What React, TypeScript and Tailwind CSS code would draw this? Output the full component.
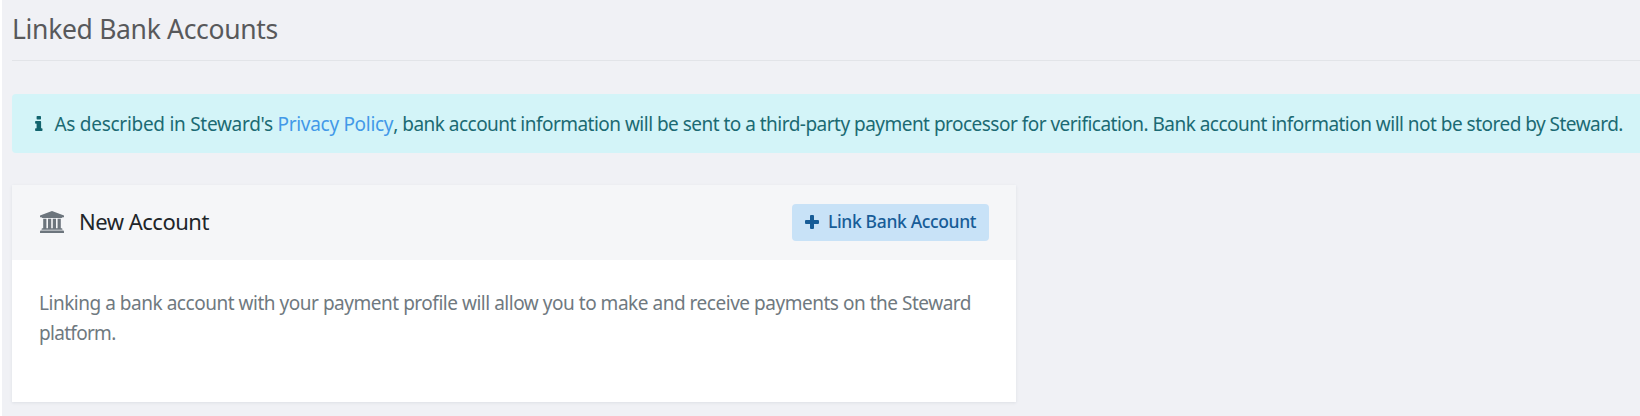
import React from 'react';

function BankIcon() {
  return (
    <svg viewBox="0 0 24 22" className="w-6 h-[22px] mt-px shrink-0" fill="#6c757d">
      <path d="M12 0 24 4.6v1.6h-1.6q0 .8-.9.8h-19q-.9 0-.9-.8H0V4.6Z" />
      <path d="M3.2 7.8h3.2v9.4h1.6V7.8h3.2v9.4h1.6V7.8H16v9.4h1.6V7.8h3.2v9.4h.7q.9 0 .9.8v.8H1.6V18q0-.8.9-.8h.7Z" />
      <path d="M.9 19.6h22.2q.9 0 .9.8V22H0v-1.6q0-.8.9-.8Z" />
    </svg>
  );
}

function InfoIcon() {
  return (
    <svg viewBox="0 0 8 15" className="w-2 h-[15px] shrink-0" fill="#12646e">
      <rect x="1.6" y="0" width="4.4" height="3.4" rx="0.7" />
      <path d="M.8 5h4.6q.7 0 .7.7v6.6h.7q.7 0 .7.7v1.3q0 .7-.7.7H.8q-.7 0-.7-.7V13q0-.7.7-.7h.8V7.7H.8q-.7 0-.7-.7V5.7Q.1 5 .8 5Z" />
    </svg>
  );
}

function PlusIcon() {
  return (
    <svg viewBox="0 0 14 14" className="w-3.5 h-3.5 shrink-0" fill="#175c97">
      <path d="M6 0h2q1 0 1 1v4h4q1 0 1 1v2q0 1-1 1H9v4q0 1-1 1H6q-1 0-1-1V9H1Q0 9 0 8V6q0-1 1-1h4V1q0-1 1-1Z" />
    </svg>
  );
}

function InfoAlert() {
  return (
    <div className="flex items-center h-[59px] pl-[23px] bg-[#d3f4f8] text-[#1b6a73] rounded-l whitespace-nowrap text-[19px]">
      <InfoIcon />
      <p className="ml-[11.5px] pt-px">
        <span className="tracking-[-0.28px]">As described in Steward's </span>
        <a href="#" className="text-[#4299e8] tracking-[-0.3px]">Privacy Policy</a>
        <span className="tracking-[-0.52px]">, bank account information will be sent to a third-party payment processor for verification. Bank account information will not be stored by Steward.</span>
      </p>
    </div>
  );
}

function NewAccountCard() {
  return (
    <section className="w-[1004px] mt-8 bg-white shadow-[0_1px_3px_rgba(60,75,100,0.1)]">
      <header className="flex items-center justify-between h-[75px] pl-[28px] pr-[27px] bg-[#f5f6f8]">
        <div className="flex items-center pb-[3px]">
          <BankIcon />
          <h2 className="ml-[15px] text-[22px] leading-[30px] tracking-[-0.5px] text-[#212529]">New Account</h2>
        </div>
        <button className="flex items-center w-[197px] h-[37px] pl-[13px] pb-[2px] rounded bg-[#c8e2f7] text-[#175c97] whitespace-nowrap">
          <PlusIcon />
          <span className="ml-[9px] text-[17.5px] font-medium tracking-[-0.35px]">Link Bank Account</span>
        </button>
      </header>
      <div className="h-[142px] pl-[27px] pt-[28px] text-[19px] leading-[30px] text-[#6f7980] whitespace-nowrap">
        <p>
          <span className="tracking-[-0.475px]">Linking a bank account with your payment profile will allow you to make and receive payments on the Steward</span>
          <br />
          <span className="tracking-[-0.7px]">platform.</span>
        </p>
      </div>
    </section>
  );
}

export default function App() {
  return (
    <div className="h-[416px] overflow-hidden border-l-2 border-white bg-[#f0f1f5] pl-[10px] font-['Noto_Sans',sans-serif]">
      <div className="h-[61px] pt-[10px] border-b border-[#e2e4e8]">
        <h1 className="text-[26.5px] leading-[38px] tracking-[-0.32px] text-[#58595b] whitespace-nowrap">Linked Bank Accounts</h1>
      </div>
      <div className="mt-[33px]">
        <InfoAlert />
      </div>
      <NewAccountCard />
    </div>
  );
}
